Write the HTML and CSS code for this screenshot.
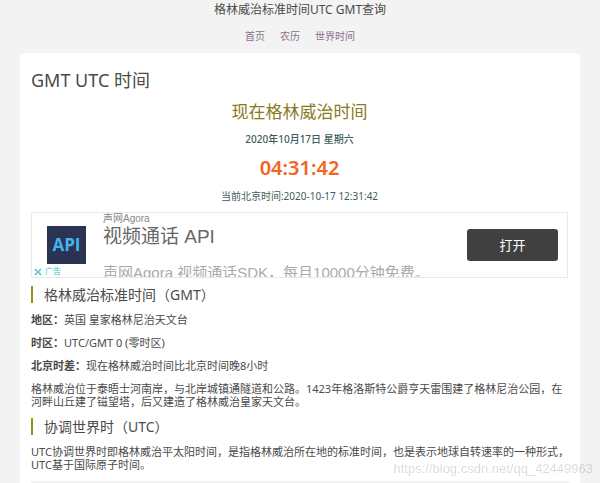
FILE: index.html
```
<!DOCTYPE html>
<html lang="zh-CN">
<head>
    <meta charset="UTF-8">
    <meta name="viewport" content="width=device-width, initial-scale=1.0">
    <title>格林威治标准时间UTC GMT查询</title>
    <link rel="stylesheet" href="styles.css">
</head>
<body>
    <header class="site-header">
        <div class="site-title">格林威治标准时间UTC GMT查询</div>
        <nav class="site-nav">
            <a href="#">首页</a>
            <a href="#">农历</a>
            <a href="#">世界时间</a>
        </nav>
    </header>

    <main class="card">
        <h1>GMT UTC 时间</h1>

        <!-- Current time -->
        <section class="clock">
            <h2>现在格林威治时间</h2>
            <p class="date">2020年10月17日 星期六</p>
            <p class="time">04:31:42</p>
            <p class="beijing">当前北京时间:2020-10-17 12:31:42</p>
        </section>

        <!-- Ad banner -->
        <aside class="ad">
            <div class="ad-logo">API</div>
            <div class="ad-text">
                <span class="ad-brand">声网Agora</span>
                <strong class="ad-title">视频通话 API</strong>
                <span class="ad-desc">声网Agora 视频通话SDK，每月10000分钟免费。</span>
            </div>
            <button class="ad-open" type="button">打开</button>
            <div class="ad-mark">
                <svg width="8" height="8" viewBox="0 0 8 8" aria-hidden="true">
                    <path d="M1 1l2.2 2.2M7 1L4.8 3.2M1 7l2.2-2.2M7 7L4.8 4.8M3 4h2" fill="none" stroke="#3fc0cf" stroke-width="1.4"/>
                </svg>
                <span>广告</span>
            </div>
        </aside>

        <h3>格林威治标准时间（GMT）</h3>
        <p><b>地区：</b>英国 皇家格林尼治天文台</p>
        <p><b>时区：</b>UTC/GMT 0 (零时区)</p>
        <p><b>北京时差：</b>现在格林威治时间比北京时间晚8小时</p>
        <p>格林威治位于泰晤士河南岸，与北岸城镇通隧道和公路。1423年格洛斯特公爵亨天雷围建了格林尼治公园，在河畔山丘建了镃望塔，后又建造了格林威治皇家天文台。</p>

        <h3>协调世界时（UTC）</h3>
        <p>UTC协调世界时即格林威治平太阳时间，是指格林威治所在地的标准时间，也是表示地球自转速率的一种形式，UTC基于国际原子时间。</p>
        <hr>
    </main>

    <div class="watermark">https://blog.csdn.net/qq_42449963</div>
</body>
</html>
```

FILE: styles.css
```
* {
    box-sizing: border-box;
}

body {
    margin: 0;
    background-color: #f3f3f3;
    color: #4a4a4a;
    font-family: "Noto Sans", "Noto Sans CJK SC", sans-serif;
    font-size: 11px;
    line-height: 13px;
}

.site-header {
    padding: 3px 20px 10px;
    text-align: center;
}

.site-title {
    font-size: 12px;
    line-height: 14px;
}

.site-nav {
    display: flex;
    justify-content: center;
    gap: 15px;
    margin-top: 12px;
    font-size: 10px;
    line-height: 14px;
}

.site-nav a {
    color: #8a6f8a;
    text-decoration: none;
}

.card {
    margin: 0 20px;
    padding: 12px 9px 12px 11px;
    background-color: #fff;
    border-radius: 4px;
}

h1 {
    margin: 0;
    font-size: 18px;
    font-weight: normal;
    line-height: 30px;
}

/* Clock */
.clock {
    margin-right: 3px;
    text-align: center;
    color: #3f5c5c;
}

.clock h2 {
    margin: 4px 0 0;
    color: #8a7a1c;
    font-size: 17px;
    font-weight: normal;
    line-height: 26px;
}

.clock p {
    margin: 0;
    font-size: 10px;
}

.clock .date {
    margin-top: 8px;
    font-weight: 500;
}

.clock .time {
    margin: 10px 0;
    color: #f26522;
    font-size: 20px;
    font-weight: 600;
    line-height: 24px;
}

/* Ad */
.ad {
    position: relative;
    display: flex;
    align-items: center;
    height: 66px;
    margin: 9px 3px 0 0;
    padding: 0 9px 0 15px;
    border: 1px solid #e9e9e9;
    overflow: hidden;
    font-family: "Liberation Sans", "Noto Sans CJK SC", sans-serif;
}

.ad-logo {
    width: 39px;
    height: 38px;
    background-color: #2a3352;
    color: #45b4f0;
    font-family: "Open Sans", sans-serif;
    font-size: 17px;
    font-weight: bold;
    line-height: 38px;
    text-align: center;
}

.ad-text {
    flex: 1;
    align-self: flex-start;
    display: flex;
    flex-direction: column;
    margin-left: 17px;
    white-space: nowrap;
}

.ad-brand {
    color: #888;
    font-size: 10px;
    line-height: 12px;
}

.ad-title {
    color: #666;
    font-size: 19px;
    font-weight: normal;
    line-height: 24px;
}

.ad-desc {
    margin-top: 12px;
    color: #aaa;
    font-size: 15px;
    line-height: 24px;
}

.ad-open {
    width: 91px;
    height: 32px;
    padding: 0 0 2px;
    border: none;
    border-radius: 3px;
    background-color: #404040;
    color: #fff;
    font-family: inherit;
    font-size: 13px;
    cursor: pointer;
}

.ad-mark {
    position: absolute;
    bottom: 0;
    left: 2px;
    display: flex;
    align-items: center;
    gap: 3px;
    color: #3fc0cf;
    font-size: 8px;
    line-height: 10px;
}

/* Article */
h3 {
    margin: 8px 0 10px;
    padding-left: 11px;
    border-left: 2px solid #8f9413;
    font-size: 14px;
    font-weight: normal;
    line-height: 17px;
}

.card > p {
    margin: 0 0 10px;
}

hr {
    height: 4px;
    margin: 0;
    border: none;
    background-color: #f3f3f3;
}

.watermark {
    position: fixed;
    right: 7px;
    bottom: 7px;
    color: rgba(0, 0, 0, 0.14);
    font-family: "Liberation Sans", sans-serif;
    font-size: 13px;
    line-height: 14px;
}
```
